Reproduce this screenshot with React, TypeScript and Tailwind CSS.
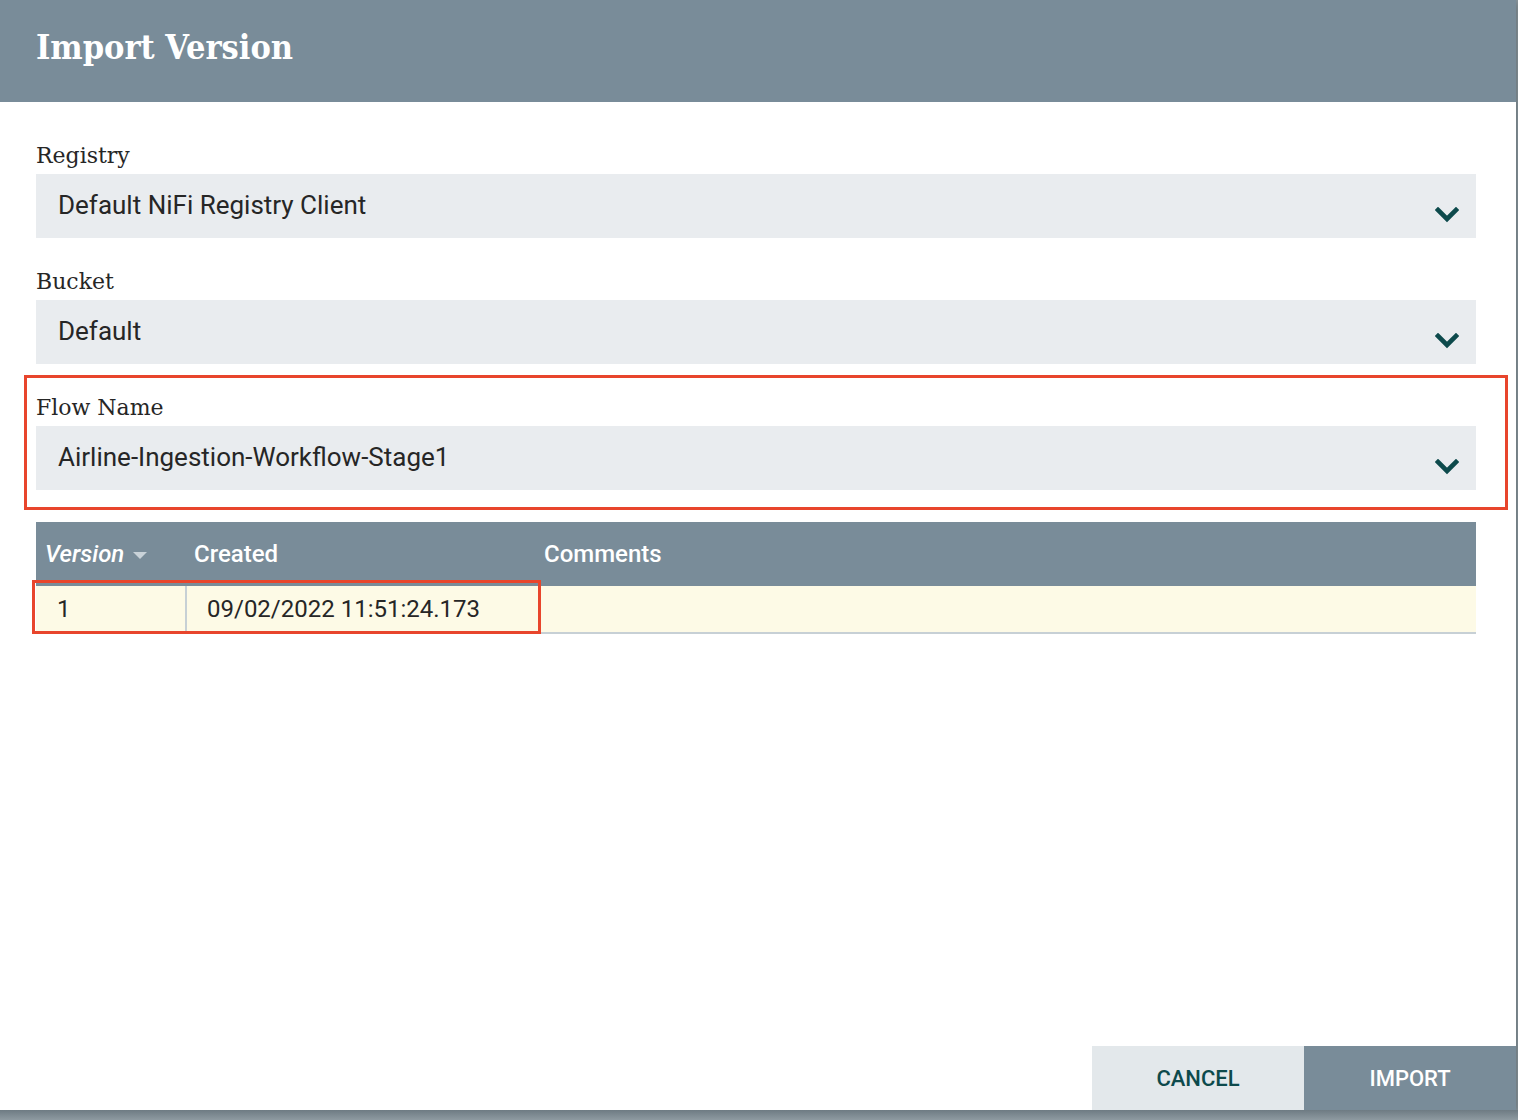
const slab = "font-['Roboto_Slab','DejaVu_Serif',serif]";

type SelectProps = {
  label: string;
  value: string;
};

const Chevron = () => (
  <svg width="24" height="16" viewBox="0 0 24 16" className="mt-[18px]">
    <polyline points="3,3 12,12 21,3" fill="none" stroke="#0d4a4c" strokeWidth="4.6" strokeLinecap="square" strokeLinejoin="miter" />
  </svg>
);

const Field = ({ label, value }: SelectProps) => (
  <div className="flex flex-col">
    <label className={`${slab} text-[22px] leading-[26px] text-[#262626] pt-[3px] mb-[5px]`}>{label}</label>
    <div className="h-[64px] bg-[#e9ecef] flex items-center justify-between pl-[22px] pr-[17px]">
      <span className="text-[26px] text-[#262626] pb-[2px]">{value}</span>
      <Chevron />
    </div>
  </div>
);

const App = () => {
  return (
    <div className="w-[1518px] h-[1120px] bg-[#8a979e] font-['Roboto',sans-serif] flex flex-col overflow-hidden">
      <div className="w-[1516px] h-[1110px] bg-white flex flex-col shadow-[0_2px_8px_rgba(0,0,0,0.35)]">
        <div className="h-[102px] bg-[#798c99] flex items-center px-[36px] shrink-0">
          <h1 className="font-['DejaVu_Serif_Condensed','DejaVu_Serif',serif] text-[34px] font-bold text-white pb-[8px]">Import Version</h1>
        </div>

        <div className="flex-1 flex flex-col pt-[38px] pl-[36px] pr-[40px]">
          <Field label="Registry" value="Default NiFi Registry Client" />
          <div className="mt-[28px]">
            <Field label="Bucket" value="Default" />
          </div>

          <div className="-ml-[12px] -mr-[32px] mt-[11px] border-[3px] border-[#e8452c] pl-[9px] pr-[29px] pt-[14px] pb-[17px]">
            <Field label="Flow Name" value="Airline-Ingestion-Workflow-Stage1" />
          </div>

          <div className="mt-[12px]">
            <div className="h-[64px] bg-[#798c99] flex items-center text-white text-[24px] font-medium">
              <div className="w-[158px] pl-[9px] flex items-center gap-[9px] italic">
                Version
                <svg width="14" height="8" viewBox="0 0 14 8" className="mt-[4px]">
                  <path d="M0 0 L14 0 L7 7 Z" fill="#c9d2d8" />
                </svg>
              </div>
              <div className="w-[350px]">Created</div>
              <div>Comments</div>
            </div>
            <div className="relative h-[48px] bg-[#fdfae6] border-b-[2px] border-[#c7d0d5] flex items-center text-[24px] text-[#262626]">
              <div className="w-[151px] h-full pl-[21px] flex items-center border-r-[2px] border-[#c7d0d5]">1</div>
              <div className="pl-[20px]">09/02/2022 11:51:24.173</div>
              <div className="absolute left-[-4px] top-[-6px] w-[509px] h-[54px] border-[3px] border-[#e8452c]" />
            </div>
          </div>
        </div>

        <div className="flex justify-end shrink-0">
          <button className="w-[212px] h-[64px] bg-[#e3e8eb] text-[#0d4a4c] text-[22px] font-medium">CANCEL</button>
          <button className="w-[212px] h-[64px] bg-[#798c99] text-white text-[22px] font-medium">IMPORT</button>
        </div>
      </div>
      <div className="flex-1 bg-gradient-to-b from-[#6e7b83] to-[#8e9aa1]" />
    </div>
  );
};

export default App;
